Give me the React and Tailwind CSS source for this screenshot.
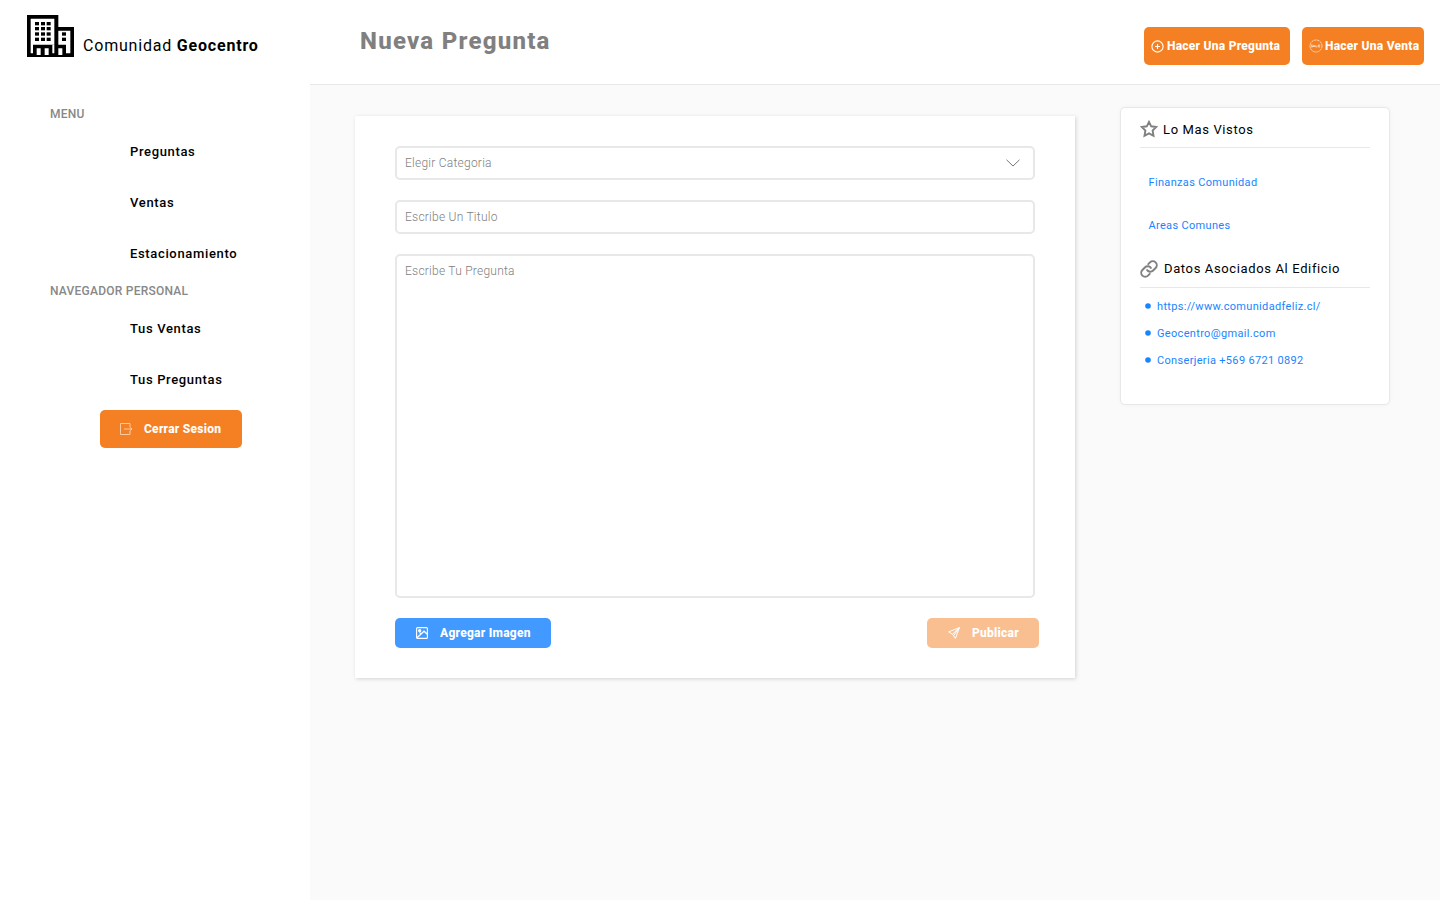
import React from "react";

function BuildingLogo() {
  return (
    <svg width="47" height="42" viewBox="0 0 141 126" aria-hidden="true">
      <path d="M0 0H94V36H141V126H0Z" fill="#000" />
      <path d="M11 11H82V89H18V115H11Z M94 47H130V115H117V89H94Z" fill="#fff" />
      <path d="M29 100H41V120H29Z M53 100H65V120H53Z M94 100H106V120H94Z M76 89H82V115H76Z" fill="#fff" />
      {[21, 36, 52, 68].map((y) =>
        [24, 42, 59].map((x) => <rect key={`${x}-${y}`} x={x} y={y} width="12" height="10" />)
      )}
      <rect x="105" y="52" width="12" height="10" />
      <rect x="105" y="68" width="12" height="10" />
    </svg>
  );
}

function PlusCircle() {
  return (
    <svg width="13" height="13" viewBox="0 0 13 13" fill="none" stroke="currentColor" strokeWidth="1.1">
      <circle cx="6.5" cy="6.5" r="5.6" />
      <path d="M6.5 4V9M4 6.5H9" />
    </svg>
  );
}

function SaleBadge() {
  return (
    <svg width="14" height="14" viewBox="0 0 14 14" fill="none" stroke="currentColor" strokeWidth=".8" className="opacity-80">
      <circle cx="7" cy="7" r="6" strokeDasharray="2.6 .54" />
      <path d="M3.7 6H2.3V7H3.5V8H2.1M4.3 8L5 6L5.8 8M4.5 7.4H5.6M6.8 6V8H8.3M11.2 6H9.3V8H11.2M9.3 7H11" strokeWidth=".75" />
    </svg>
  );
}

function ExitIcon() {
  return (
    <svg width="13" height="12" viewBox="0 0 13 12" fill="none" stroke="currentColor" className="opacity-65" strokeWidth=".9">
      <path d="M10 4V.5H.5V11.5H10V8" />
      <path d="M4 6H12M9.8 4.3L12 6L9.8 7.7" />
    </svg>
  );
}

function StarIcon() {
  return (
    <svg width="18" height="18" viewBox="0 0 18 18" fill="none" stroke="#808080" strokeWidth="1.9">
      <path d="M9 1.9L11.2 6.3L16.2 7L12.6 10.5L13.5 15.8L9 13.3L4.5 15.8L5.4 10.5L1.8 7L6.8 6.3Z" />
    </svg>
  );
}

function LinkIcon() {
  return (
    <svg width="18" height="18" viewBox="0 0 24 24" fill="none" stroke="#808080" strokeWidth="2.6" strokeLinecap="round" strokeLinejoin="round">
      <path d="M9.5 13.5a5.3 5.3 0 0 0 8 .5l3.3-3.3a5.3 5.3 0 0 0-7.5-7.5l-2.3 2.3" />
      <path d="M14.5 10.5a5.3 5.3 0 0 0-8-.5l-3.3 3.3a5.3 5.3 0 0 0 7.5 7.5l2.3-2.3" />
    </svg>
  );
}

function ImageIcon() {
  return (
    <svg width="12" height="12" viewBox="0 0 12 12" fill="none" stroke="currentColor" strokeWidth="1.1">
      <rect x=".6" y=".6" width="10.8" height="10.8" rx="1" />
      <circle cx="3.7" cy="3.7" r="1.1" fill="currentColor" />
      <path d="M1 10.8L8 4.2L11.4 7.2" strokeWidth="1.3" />
      <path d="M3.4 5.4L5 7" />
    </svg>
  );
}

function SendIcon() {
  return (
    <svg width="12" height="12" viewBox="0 0 12 12" fill="none" stroke="currentColor" strokeWidth="1" strokeLinejoin="round">
      <path d="M11.4.6L.6 4.9L4.5 7.2L7.4 11.4Z M11.4.6L4.5 7.2M11.4.6L6 8.2" />
    </svg>
  );
}

function NavItem({ children }) {
  return (
    <a className="flex h-[51px] items-center pl-20 text-[13px] font-medium tracking-[0.65px] text-black">{children}</a>
  );
}

function NavHeading({ children }) {
  return <h2 className="flex h-[24px] items-center text-[12px] font-medium tracking-[0.24px] text-[#888888]">{children}</h2>;
}

function Sidebar() {
  return (
    <aside className="flex w-[310px] shrink-0 flex-col bg-white">
      <div className="flex h-[84px] items-start pt-[15px] pl-[27px]">
        <BuildingLogo />
        <p className="ml-[9px] pt-[19px] text-[16px] leading-6 tracking-[0.8px] whitespace-nowrap text-black">
          Comunidad <b className="font-bold">Geocentro</b>
        </p>
      </div>
      <nav className="flex flex-col pt-[18px] pl-[50px]">
        <NavHeading>MENU</NavHeading>
        <NavItem>Preguntas</NavItem>
        <NavItem>Ventas</NavItem>
        <NavItem>Estacionamiento</NavItem>
        <NavHeading>NAVEGADOR PERSONAL</NavHeading>
        <NavItem>Tus Ventas</NavItem>
        <NavItem>Tus Preguntas</NavItem>
      </nav>
      <button className="mt-[5px] ml-[100px] flex h-[38px] w-[142px] items-center rounded-[5px] bg-[#f58023] pl-[20px] text-[12px] font-extrabold tracking-[0.26px] text-white">
        <ExitIcon />
        <span className="ml-[11px]">Cerrar Sesion</span>
      </button>
    </aside>
  );
}

function Header() {
  return (
    <header className="flex h-[85px] items-start justify-between border-b border-[#e8e8e8] bg-white pr-4 pl-[50px]">
      <h1 className="pt-[23px] text-[24px] leading-9 font-extrabold tracking-[1.25px] text-[#808080]">Nueva Pregunta</h1>
      <div className="flex gap-3 pt-[27px] text-[12px] font-extrabold tracking-[0.25px] whitespace-nowrap text-white">
        <button className="flex h-[38px] w-[146px] items-center rounded-[5px] bg-[#f58023] pl-[7px]">
          <PlusCircle />
          <span className="ml-[3px]">Hacer Una Pregunta</span>
        </button>
        <button className="flex h-[38px] w-[122px] items-center rounded-[5px] bg-[#f58023] pl-[6.5px]">
          <SaleBadge />
          <span className="ml-[2.5px]">Hacer Una Venta</span>
        </button>
      </div>
    </header>
  );
}

function QuestionForm() {
  return (
    <section className="mt-[31px] ml-[45px] flex h-[562px] w-[720px] flex-col bg-white px-10 pt-[30px] shadow-[1px_1px_4px_rgba(0,0,0,0.16)]">
      <div className="flex h-[34px] items-center justify-between rounded-[5px] border-2 border-[#e8e8e8] pr-3 pl-2 text-[12px] font-light tracking-[0.24px] text-[#808080]">
        <span>Elegir Categoria</span>
        <svg width="16" height="10" viewBox="0 0 16 10" fill="none" stroke="#777" strokeWidth="1">
          <path d="M1.5 1.8L8 8L14.5 1.8" />
        </svg>
      </div>
      <div className="mt-5 flex h-[34px] items-center rounded-[5px] border-2 border-[#e8e8e8] pl-2 text-[12px] font-light tracking-[0.24px] text-[#808080]">
        Escribe Un Titulo
      </div>
      <div className="mt-5 h-[344px] rounded-[5px] border-2 border-[#e8e8e8] pt-[6px] pl-2 text-[12px] leading-[18px] font-light tracking-[0.24px] text-[#808080]">
        Escribe Tu Pregunta
      </div>
      <div className="mt-5 -mr-1 flex justify-between text-[12px] font-extrabold tracking-[0.26px] text-white">
        <button className="flex h-[30px] w-[156px] items-center rounded-[5px] bg-[#4299ff] pl-[20.5px]">
          <ImageIcon />
          <span className="ml-[12.5px]">Agregar Imagen</span>
        </button>
        <button className="flex h-[30px] w-[112px] items-center rounded-[5px] bg-[#fabf91] pl-[20.5px]">
          <SendIcon />
          <span className="ml-[12.5px]">Publicar</span>
        </button>
      </div>
    </section>
  );
}

function InfoCard() {
  return (
    <aside className="mt-[22px] ml-[45px] h-[298px] w-[270px] rounded-[5px] border border-[#e8e8e8] bg-white px-[19px] shadow-[0_0_4px_rgba(0,0,0,0.04)]">
      <h2 className="flex h-[40px] items-center border-b border-[#e8e8e8] pt-[3px] text-[13px] font-normal tracking-[0.63px] text-black">
        <StarIcon />
        <span className="ml-[5px] pt-px">Lo Mas Vistos</span>
      </h2>
      <div className="flex flex-col pt-[14px] pl-[8.5px] text-[11px] tracking-[0.33px] text-[#1884ff]">
        <a className="flex h-[43px] items-center">Finanzas Comunidad</a>
        <a className="flex h-[43px] items-center">Areas Comunes</a>
      </div>
      <h2 className="flex h-[40px] items-center border-b border-[#e8e8e8] pt-[3px] text-[13px] font-normal tracking-[0.63px] whitespace-nowrap text-black">
        <LinkIcon />
        <span className="ml-[6px]">Datos Asociados Al Edificio</span>
      </h2>
      <ul className="flex flex-col pt-[6px] pl-[5px] text-[11px] tracking-[0.33px] text-[#1884ff]">
        {["https://www.comunidadfeliz.cl/", "Geocentro@gmail.com", "Conserjeria +569 6721 0892"].map((text) => (
          <li key={text} className="flex h-[27px] items-center gap-[6px]">
            <svg width="6" height="6" viewBox="0 0 6 6" className="mb-[3px]" fill="#1884ff">
              <circle cx="3" cy="3" r="2.8" />
            </svg>
            {text}
          </li>
        ))}
      </ul>
    </aside>
  );
}

export default function App() {
  return (
    <div className="flex h-screen w-full overflow-hidden bg-[#fafafa] font-['Roboto',sans-serif]">
      <Sidebar />
      <div className="flex min-w-0 flex-1 flex-col">
        <Header />
        <main className="flex items-start">
          <QuestionForm />
          <InfoCard />
        </main>
      </div>
    </div>
  );
}
